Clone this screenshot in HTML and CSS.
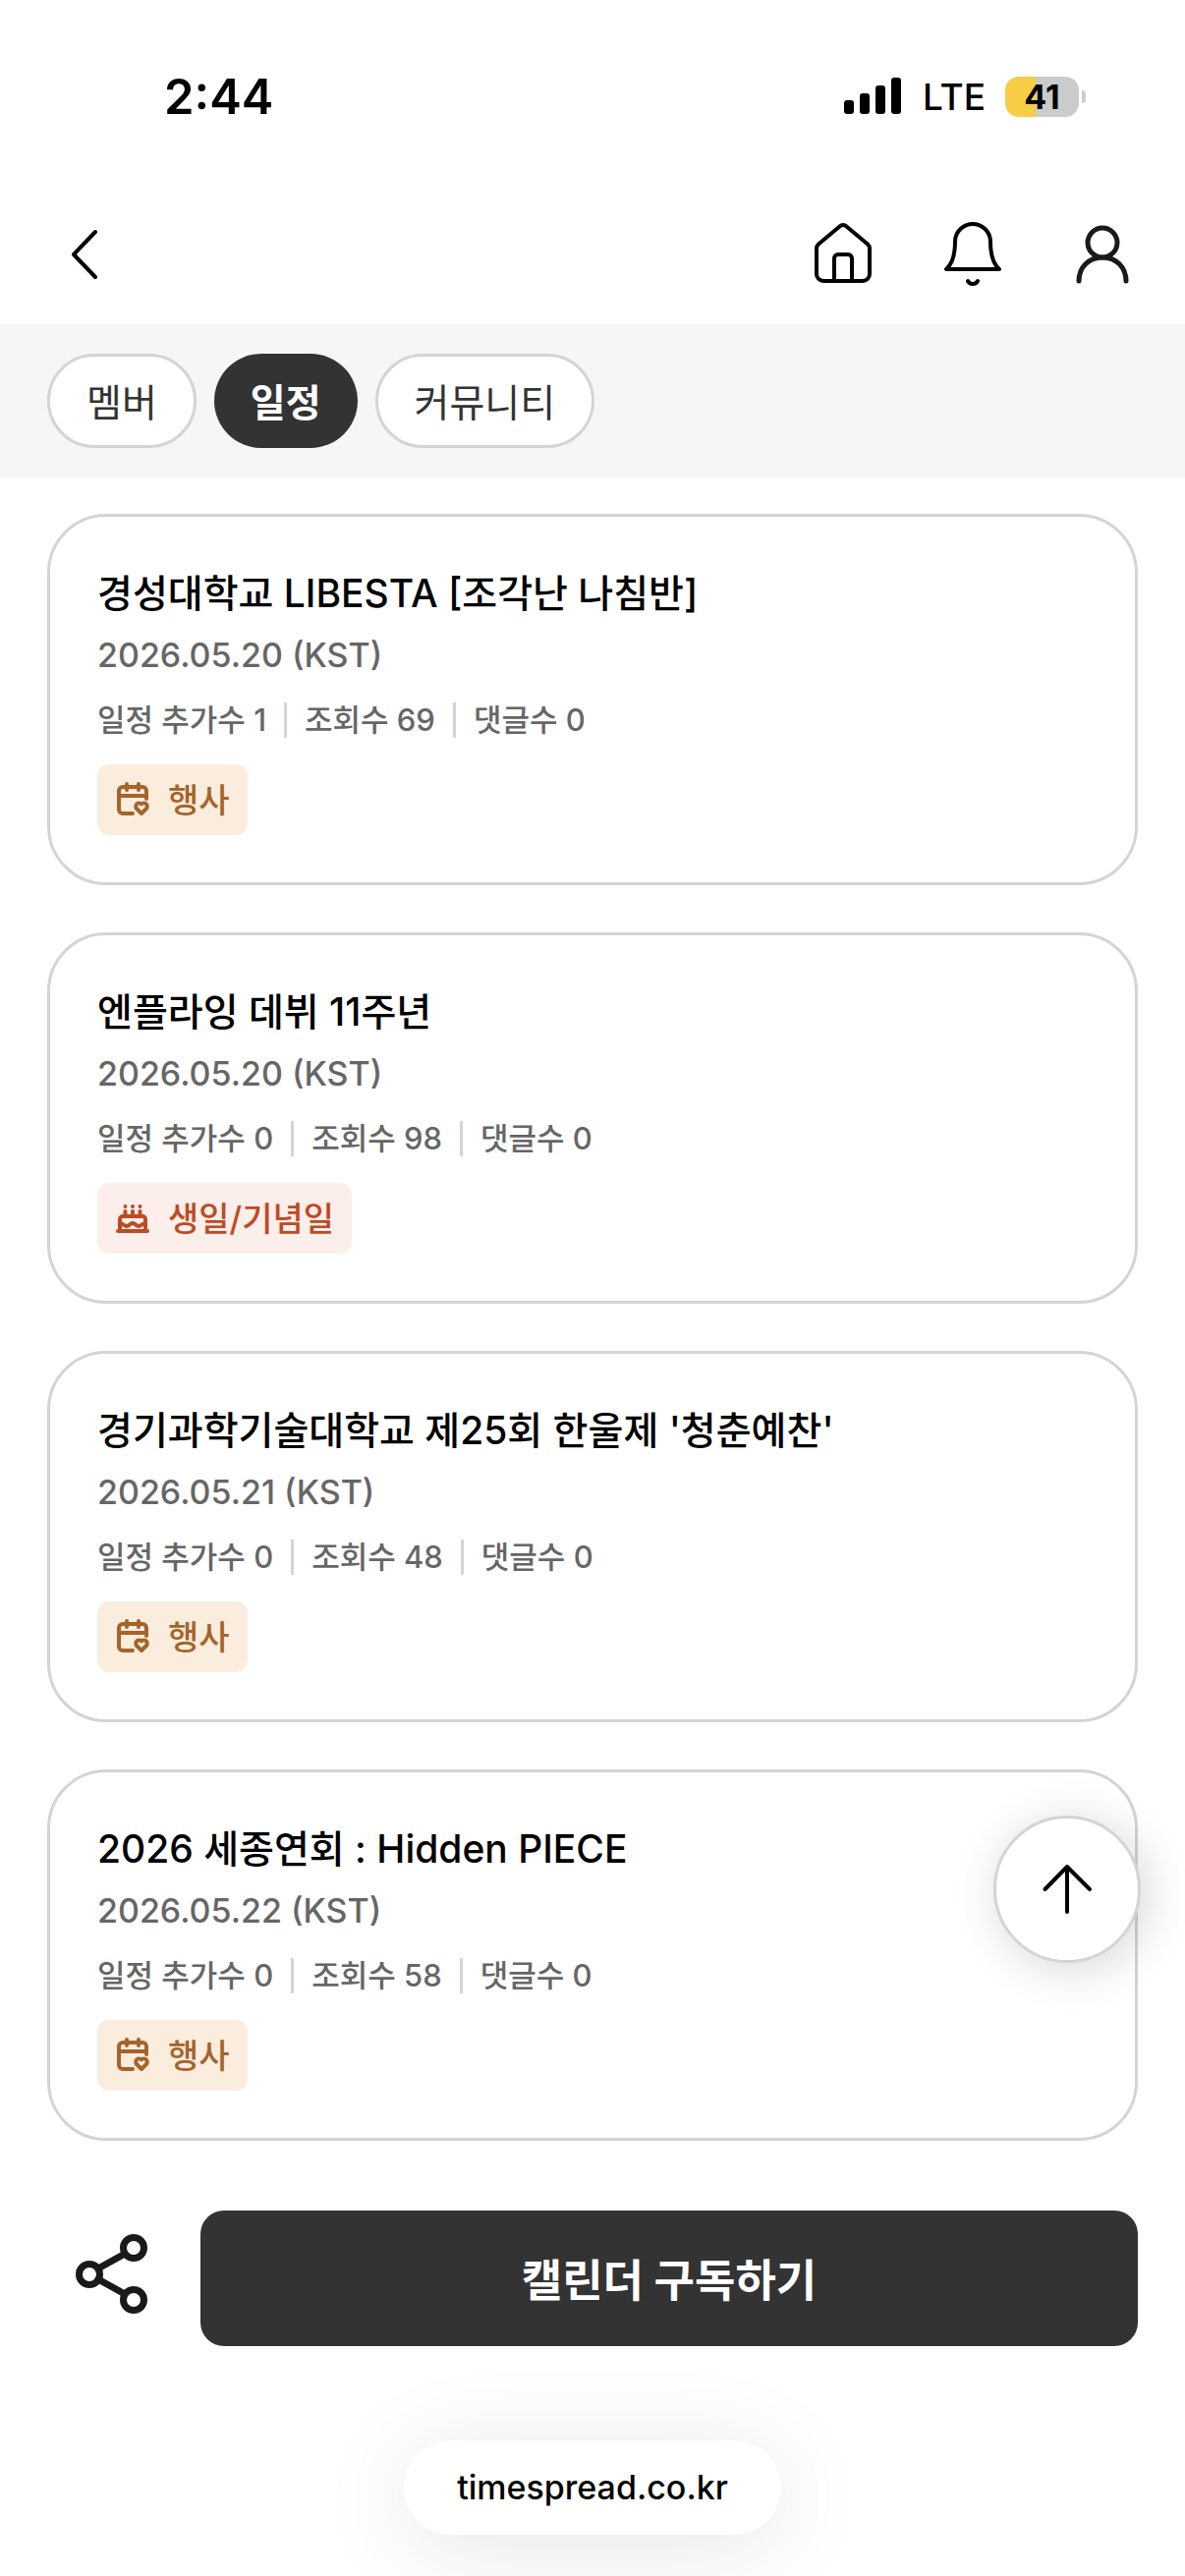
FILE: index.html
```html
<!DOCTYPE html>
<html lang="ko">
<head>
    <meta charset="UTF-8">
    <meta name="viewport" content="width=device-width, initial-scale=1">
    <title>타임스프레드 캘린더</title>
    <link rel="stylesheet" href="styles.css">
</head>
<body>
    <!-- 공용 아이콘 -->
    <svg class="sprite" width="0" height="0" aria-hidden="true">
        <symbol id="icon-event" viewBox="0 0 36 36">
            <path d="M18 33H8a4 4 0 0 1-4-4V10a4 4 0 0 1 4-4h20a4 4 0 0 1 4 4v8M4 15h28M12 3v6M24 3v6"/>
            <path d="M27 33l-5-5a3.400 3.400 0 0 1 5-4.600a3.400 3.400 0 0 1 5 4.600z"/>
        </symbol>
        <symbol id="icon-cake" viewBox="0 0 36 36">
            <path d="M3 32h30M5 32V20a3 3 0 0 1 3-3h20a3 3 0 0 1 3 3v12M5 24c3 0 4 3 7 3s3-3 6-3 3 3 6 3 4-3 7-3M10.500 12v5M18 12v5M25.500 12v5M10.500 7v0M18 7v0M25.500 7v0"/>
        </symbol>
    </svg>

    <div class="status-bar">
        <span class="time">2:44</span>
        <div class="status-right">
            <svg class="signal" width="58" height="38" viewBox="0 0 58 38">
                <rect x="0" y="23" width="10" height="14" rx="3"/>
                <rect x="16" y="16" width="10" height="21" rx="3"/>
                <rect x="32" y="8" width="10" height="29" rx="3"/>
                <rect x="48" y="0" width="10" height="37" rx="3"/>
            </svg>
            <span class="network">LTE</span>
            <span class="battery">41</span>
        </div>
    </div>

    <header class="header">
        <button class="icon-btn" aria-label="뒤로">
            <svg width="72" height="72" viewBox="0 0 72 72"><path d="M49 13L27 36l22 23"/></svg>
        </button>
        <nav class="header-menu">
            <a href="#" class="icon-btn" aria-label="홈">
                <svg width="72" height="72" viewBox="0 0 72 72">
                    <path d="M32.500 7.500a5 5 0 0 1 7 0L61 25.500a6 6 0 0 1 2 5V56a7 7 0 0 1-7 7H16a7 7 0 0 1-7-7V30.500a6 6 0 0 1 2-5z"/>
                    <path d="M27 63V40a4 4 0 0 1 4-4h10a4 4 0 0 1 4 4v23"/>
                </svg>
            </a>
            <a href="#" class="icon-btn" aria-label="알림">
                <svg width="72" height="72" viewBox="0 0 72 72">
                    <path d="M9 51h54c-7-6-9-18-9-28a18 18 0 0 0-36 0c0 10-2 22-9 28zM31 63c2 4 8 4 10 0"/>
                </svg>
            </a>
            <a href="#" class="icon-btn user" aria-label="내 정보">
                <svg width="72" height="72" viewBox="0 0 72 72">
                    <circle cx="36" cy="24" r="15"/>
                    <path d="M12 63c0-14 10-24 24-24s24 10 24 24"/>
                </svg>
            </a>
        </nav>
    </header>

    <nav class="tabs">
        <button class="tab">멤버</button>
        <button class="tab active">일정</button>
        <button class="tab">커뮤니티</button>
    </nav>

    <main class="list">
        <article class="card">
            <h2>경성대학교 LIBESTA [조각난 나침반]</h2>
            <p class="date">2026.05.20 (KST)</p>
            <div class="stats"><span>일정 추가수 1</span><span>조회수 69</span><span>댓글수 0</span></div>
            <span class="tag event"><svg class="tag-icon"><use href="#icon-event"/></svg>행사</span>
        </article>

        <article class="card">
            <h2>엔플라잉 데뷔 11주년</h2>
            <p class="date">2026.05.20 (KST)</p>
            <div class="stats"><span>일정 추가수 0</span><span>조회수 98</span><span>댓글수 0</span></div>
            <span class="tag birthday"><svg class="tag-icon"><use href="#icon-cake"/></svg>생일/기념일</span>
        </article>

        <article class="card">
            <h2>경기과학기술대학교 제25회 한울제 '청춘예찬'</h2>
            <p class="date">2026.05.21 (KST)</p>
            <div class="stats"><span>일정 추가수 0</span><span>조회수 48</span><span>댓글수 0</span></div>
            <span class="tag event"><svg class="tag-icon"><use href="#icon-event"/></svg>행사</span>
        </article>

        <article class="card">
            <h2>2026 세종연회 : Hidden PIECE</h2>
            <p class="date">2026.05.22 (KST)</p>
            <div class="stats"><span>일정 추가수 0</span><span>조회수 58</span><span>댓글수 0</span></div>
            <span class="tag event"><svg class="tag-icon"><use href="#icon-event"/></svg>행사</span>
        </article>
    </main>

    <button class="top-btn" aria-label="맨 위로">
        <svg width="72" height="72" viewBox="0 0 72 72"><path d="M36 59V13M13.500 36L36 13l23 23"/></svg>
    </button>

    <footer class="bottom">
        <div class="actions">
            <button class="share-btn" aria-label="공유">
                <svg width="84" height="84" viewBox="0 0 84 84">
                    <circle cx="19" cy="42" r="10.500"/>
                    <circle cx="64" cy="15" r="10.500"/>
                    <circle cx="64" cy="68" r="10.500"/>
                    <path d="M28 36l27-15M28 47l27 15"/>
                </svg>
            </button>
            <button class="subscribe-btn">캘린더 구독하기</button>
        </div>
        <div class="url-pill">timespread.co.kr</div>
    </footer>
</body>
</html>
```
FILE: styles.css
```css
* {
    box-sizing: border-box;
}
body {
    margin: 0;
    min-height: 100vh;
    display: flex;
    flex-direction: column;
    font-family: Inter, "Noto Sans CJK KR", sans-serif;
    background: #fff;
    color: #000;
    overflow-x: hidden;
}
button {
    font-family: inherit;
    border: none;
    background: none;
    padding: 0;
    cursor: pointer;
}
svg {
    display: block;
    fill: none;
    stroke: currentColor;
    stroke-width: 4;
    stroke-linecap: round;
    stroke-linejoin: round;
}
.sprite {
    position: absolute;
}

/* 상태 표시줄 */
.status-bar {
    display: flex;
    justify-content: space-between;
    align-items: center;
    height: 196px;
    padding: 0 108px 0 167px;
}
.time {
    font-size: 49px;
    font-weight: 600;
}
.status-right {
    display: flex;
    align-items: center;
}
.signal {
    fill: #000;
    stroke: none;
}
.network {
    margin: 0 20px 0 22px;
    font-size: 37px;
    font-weight: 500;
}
.battery {
    position: relative;
    width: 75px;
    height: 41px;
    border-radius: 14px;
    background: linear-gradient(to right, #f6cd45 41%, #cbcbcb 41%);
    font-size: 34px;
    font-weight: 700;
    line-height: 41px;
    text-align: center;
}
.battery::after {
    content: "";
    position: absolute;
    top: 14px;
    right: -7px;
    width: 4px;
    height: 13px;
    border-radius: 0 4px 4px 0;
    background: #cbcbcb;
}

/* 헤더 */
.header {
    display: flex;
    justify-content: space-between;
    align-items: center;
    height: 134px;
    padding: 0 48px 8px;
}
.header-menu {
    display: flex;
    gap: 60px;
}
.icon-btn {
    color: #000;
}
.user svg {
    color: #1a1a1a;
    stroke-width: 5;
}

/* 탭 */
.tabs {
    display: flex;
    gap: 18px;
    padding: 30px 48px;
    background: #f5f6f8;
}
.tab {
    height: 96px;
    padding: 0 37px 2px;
    border: 3px solid #d4d4d4;
    border-radius: 48px;
    background: #fff;
    color: #333;
    font-size: 39px;
    font-weight: 400;
}
.tab.active {
    border: none;
    background: #333;
    color: #fff;
    font-weight: 700;
}

/* 일정 목록 */
.list {
    display: flex;
    flex-direction: column;
    gap: 48px;
    padding: 37px 48px 0;
}
.card {
    padding: 48px;
    border: 3px solid #d4d4d4;
    border-radius: 60px;
}
.card h2 {
    margin: 0;
    font-size: 39px;
    font-weight: 500;
    line-height: 60px;
}
.date {
    margin: 6px 0 21px;
    color: #666;
    font-size: 34px;
    font-weight: 500;
    line-height: 54px;
}
.stats {
    display: flex;
    margin-bottom: 27px;
    color: #666;
    font-size: 31px;
    font-weight: 500;
    line-height: 36px;
}
.stats span + span {
    margin-left: 18px;
    padding-left: 18px;
    border-left: 3px solid #d4d4d4;
}
.tag {
    display: flex;
    align-items: center;
    gap: 18px;
    width: fit-content;
    height: 72px;
    padding: 0 18px 3px;
    border-radius: 12px;
    font-size: 34px;
    font-weight: 500;
}
.tag-icon {
    width: 36px;
    height: 36px;
}
.event {
    background: #fbedde;
    color: #a4642a;
}
.birthday {
    background: #fceeeb;
    color: #be4b24;
}

/* 맨 위로 버튼 */
.top-btn {
    position: fixed;
    right: 45px;
    bottom: 624px;
    display: flex;
    align-items: center;
    justify-content: center;
    width: 150px;
    height: 150px;
    border: 3px solid #d4d4d4;
    border-radius: 50%;
    background: #fff;
    color: #000;
    box-shadow: 6px 6px 48px rgba(0, 0, 0, 0.16);
}

/* 하단 영역 */
.bottom {
    margin-top: auto;
    padding: 0 48px 42px;
}
.actions {
    display: flex;
    align-items: center;
    gap: 48px;
}
.share-btn {
    padding: 0 0 8px 24px;
    color: #1a1a1a;
}
.share-btn svg {
    stroke-width: 7;
}
.subscribe-btn {
    flex: 1;
    height: 138px;
    padding-bottom: 2px;
    border-radius: 24px;
    background: #333;
    color: #fff;
    font-size: 45px;
    font-weight: 700;
}
.url-pill {
    width: fit-content;
    margin: 96px auto 0;
    padding: 0 54px;
    border-radius: 48px;
    background: #fffffd;
    font-size: 34px;
    font-weight: 500;
    line-height: 96px;
    box-shadow: 0 12px 96px rgba(0, 0, 0, 0.1);
}
```
